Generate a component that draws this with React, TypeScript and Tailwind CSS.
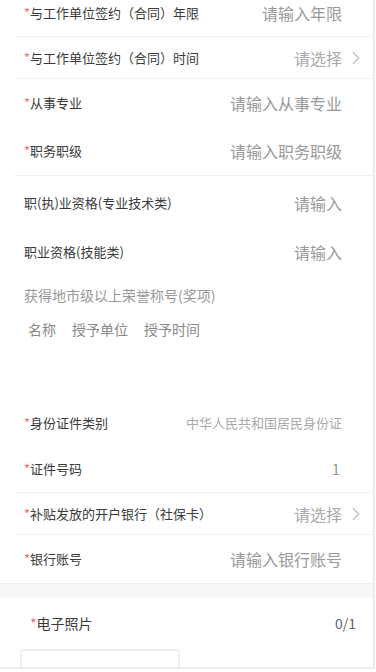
import { ChevronRight } from "lucide-react";

const font = {
  fontFamily: '"Noto Sans CJK SC", "Noto Sans", sans-serif',
};

function Star() {
  return <span className="text-[#f56c6c]">*</span>;
}

function InputRow({
  label,
  placeholder,
  required = true,
  border = true,
  className = "h-[48px]",
}: {
  label: string;
  placeholder: string;
  required?: boolean;
  border?: boolean;
  className?: string;
}) {
  return (
    <div className={`ml-[14px] flex items-center pl-[10px] pr-[31px] ${border ? "border-b border-[#f0f0f0]" : ""} ${className}`}>
      <div className="flex-1 text-[13px] text-[#3a3a3a]">
        {required ? <Star /> : null}
        {label}
      </div>
      <div className="text-[16px] text-[#999]">{placeholder}</div>
    </div>
  );
}

function SelectRow({ label, value = "请选择" }: { label: string; value?: string }) {
  return (
    <div className="ml-[14px] flex h-[42px] items-center border-b border-[#f0f0f0] pl-[10px] pr-[6px]">
      <div className="flex-1 text-[13px] text-[#3a3a3a]">
        <Star />
        {label}
      </div>
      <div className="text-[16px] text-[#aaa]">{value}</div>
      <ChevronRight className="ml-[3px] h-[22px] w-[22px] text-[#c0c0c0]" strokeWidth={1.4} />
    </div>
  );
}

export default function App() {
  return (
    <div className="h-[672px] w-[376px] bg-white" style={font}>
      <div className="h-[669px] w-[375px] overflow-hidden border-b-2 border-r-2 border-[#ececec] bg-white">
        {/* first row is partly scrolled out of view */}
        <div className="ml-[14px] flex h-[37px] items-center border-b border-[#f0f0f0] pb-[11px] pl-[10px] pr-[31px]">
          <div className="flex-1 text-[13px] text-[#3a3a3a]">
            <Star />
            与工作单位签约（合同）年限
          </div>
          <div className="text-[16px] text-[#999]">请输入年限</div>
        </div>
        <SelectRow label="与工作单位签约（合同）时间" />
        <InputRow label="从事专业" placeholder="请输入从事专业" border={false} />
        <InputRow label="职务职级" placeholder="请输入职务职级" className="h-[49px]" />
        <InputRow label="职(执)业资格(专业技术类)" placeholder="请输入" required={false} border={false} className="h-[50px] pt-[3px]" />
        <InputRow label="职业资格(技能类)" placeholder="请输入" required={false} border={false} className="h-[48px] pt-[3px]" />

        <div className="h-[126px] pl-[24px] pt-[11px]">
          <div className="text-[14px] text-[#999]">获得地市级以上荣誉称号(奖项)</div>
          <div className="mt-[13px] flex gap-[16px] pl-[4px] text-[14px] text-[#888]">
            <span>名称</span>
            <span>授予单位</span>
            <span>授予时间</span>
          </div>
        </div>

        <div className="ml-[14px] flex h-[46px] items-center pl-[10px] pr-[31px]">
          <div className="flex-1 text-[13px] text-[#3a3a3a]">
            <Star />
            身份证件类别
          </div>
          <div className="text-[13px] text-[#aaa]">中华人民共和国居民身份证</div>
        </div>
        <div className="ml-[14px] flex h-[47px] items-center border-b border-[#f0f0f0] pl-[10px] pr-[33px]">
          <div className="flex-1 text-[13px] text-[#3a3a3a]">
            <Star />
            证件号码
          </div>
          <div className="text-[15px] text-[#999]">1</div>
        </div>
        <SelectRow label="补贴发放的开户银行（社保卡）" />
        <InputRow label="银行账号" placeholder="请输入银行账号" border={false} className="h-[48px]" />

        <div className="h-[15px] border-t border-[#eeeeee] bg-[#f8f8f8]" />

        <div className="px-[17px] pt-[15px]">
          <div className="flex items-center pl-[13px]">
            <div className="flex-1 text-[14px] text-[#3a3a3a]">
              <Star />
              电子照片
            </div>
            <div className="text-[14px] text-[#666]">0/1</div>
          </div>
          <div className="ml-[3px] mt-[15px] h-[80px] w-[160px] rounded-[3px] border-2 border-[#eeeeee] bg-white" />
        </div>
      </div>
    </div>
  );
}
